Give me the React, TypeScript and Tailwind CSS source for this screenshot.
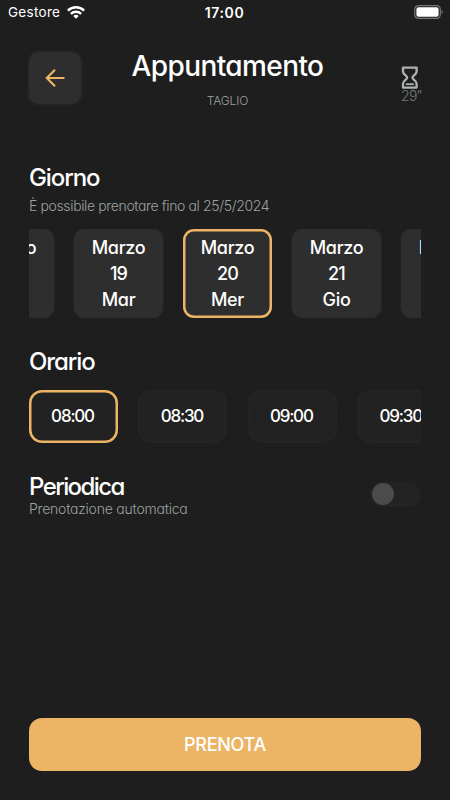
import React, { useState } from "react";

interface Day {
    month: string;
    day: string;
    weekday: string;
}

const DAYS: Day[] = [
    { month: "Marzo", day: "18", weekday: "Lun" },
    { month: "Marzo", day: "19", weekday: "Mar" },
    { month: "Marzo", day: "20", weekday: "Mer" },
    { month: "Marzo", day: "21", weekday: "Gio" },
    { month: "Marzo", day: "22", weekday: "Ven" },
];

const TIMES = ["08:00", "08:30", "09:00", "09:30"];

const StatusBar: React.FC = () => (
    <div className="grid h-6 grid-cols-3 items-center pl-2 pr-[7px] text-[13.5px] text-white">
        <div className="flex items-center gap-[7px]">
            <span className="tracking-[0.3px]">Gestore</span>
            <svg width="18" height="13" viewBox="0 0 18 13" fill="none" stroke="#fff" strokeWidth="2.5">
                <path d="M.9 4.6a11.6 11.6 0 0 1 16.2 0" />
                <path d="M3.9 7.8a7.3 7.3 0 0 1 10.2 0" />
                <path d="M9 12.8l-2.7-2.7a3.8 3.8 0 0 1 5.4 0z" fill="#fff" stroke="none" />
            </svg>
        </div>
        <span className="pr-0.5 text-center text-[14px] font-semibold tracking-[0.6px]">17:00</span>
        <svg className="justify-self-end" width="29" height="14" viewBox="0 0 29 14" fill="none">
            <rect x="0.7" y="0.7" width="25.6" height="12.6" rx="3.6" stroke="#777" strokeWidth="1.2" />
            <rect x="2.4" y="2.3" width="22.2" height="9.4" rx="2" fill="#fff" />
            <path d="M27.6 5v4c.8-.4 1.2-1.1 1.2-2s-.4-1.6-1.2-2z" fill="#777" />
        </svg>
    </div>
);

const App: React.FC = () => {
    const [day, setDay] = useState("20");
    const [time, setTime] = useState("08:00");
    const [periodic, setPeriodic] = useState(false);

    return (
        <div className="flex h-[800px] w-[450px] flex-col overflow-hidden bg-[#1e1e1e] font-['Inter',sans-serif] text-white">
            <StatusBar />
            <main className="flex flex-1 flex-col px-[29px] pb-[29px] [font-feature-settings:'cv11']">
                <header className="mt-7 flex h-[52px] items-start justify-between">
                    <button className="flex size-[52px] items-center justify-center rounded-[10px] bg-[#2e2e2e] shadow-[0_0_4px_#2e2e2e]">
                        <svg width="20" height="18" viewBox="0 0 20 18" fill="none" stroke="#ebb565" strokeWidth="2.2">
                            <path d="M10 0.8 1.8 9l8.2 8.2M1.8 9h17.7" />
                        </svg>
                    </button>
                    <div className="flex flex-col items-center pl-[5px]">
                        <h1 className="text-[28px] leading-7 font-medium tracking-[-0.6px]">Appuntamento</h1>
                        <p className="mt-[13px] text-[12px] leading-4 font-light tracking-[-0.1px] text-[#9da3a1]">TAGLIO</p>
                    </div>
                    <div className="flex w-[52px] flex-col items-start pl-8 pt-3.5">
                        <svg className="shrink-0" width="18" height="23" viewBox="0 0 18 23" fill="none" stroke="#aeb3b1" strokeWidth="2.3" strokeLinejoin="round">
                            <path d="M2 1.6h13.6v4.2c0 2.8-4.2 3.7-4.2 5.8s4.2 3 4.2 5.8v4.2H2v-4.2c0-2.8 4.2-3.7 4.2-5.8S2 8.6 2 5.8z" />
                            <path d="M4.8 18.2h8" strokeWidth="1.8" />
                        </svg>
                        <span className="-mt-px whitespace-nowrap text-[14px] leading-4 font-light tracking-[-0.7px] text-[#747a78]">29"</span>
                    </div>
                </header>

                <section className="mt-[58px]">
                    <h2 className="text-[24px] leading-8 font-medium tracking-[-1.1px]">Giorno</h2>
                    <p className="mt-0.5 text-[14px] leading-5 font-light tracking-[-0.37px] text-[#9da3a1]">È possibile prenotare fino al 25/5/2024</p>
                    <div className="mt-[13px] overflow-hidden">
                        <div className="-ml-16 flex gap-5">
                            {DAYS.map((d) => (
                                <button
                                    key={d.day}
                                    onClick={() => setDay(d.day)}
                                    className={`flex h-[89px] w-[89px] shrink-0 flex-col items-center justify-center rounded-[11px] bg-[#2e2e2e] text-[18px] leading-[26px] font-medium tracking-[-0.3px] ${
                                        day === d.day ? "shadow-[inset_0_0_0_2.5px_#ebb565]" : "shadow-[0_0_3px_#2e2e2e]"
                                    }`}
                                >
                                    <span>{d.month}</span>
                                    <span className="tracking-[-0.8px]">{d.day}</span>
                                    <span>{d.weekday}</span>
                                </button>
                            ))}
                        </div>
                    </div>
                </section>

                <section className="mt-7">
                    <h2 className="text-[24px] leading-8 font-medium tracking-[-1.1px]">Orario</h2>
                    <div className="mt-3 overflow-hidden">
                        <div className="flex gap-[20.4px]">
                            {TIMES.map((t) => (
                                <button
                                    key={t}
                                    onClick={() => setTime(t)}
                                    className={`h-[53px] w-[89px] shrink-0 rounded-[13px] bg-[#222222] pr-[2px] text-[17px] font-medium tracking-[-1.2px] ${
                                        time === t ? "shadow-[inset_0_0_0_2.5px_#ebb565]" : "shadow-[inset_0_0_0_2px_#242424]"
                                    }`}
                                >
                                    {t}
                                </button>
                            ))}
                        </div>
                    </div>
                </section>

                <section className="mt-7 flex items-center justify-between">
                    <div>
                        <h2 className="text-[24px] leading-8 font-medium tracking-[-1.6px]">Periodica</h2>
                        <p className="-mt-1 text-[14px] leading-5 font-light tracking-[-0.22px] text-[#9da3a1]">Prenotazione automatica</p>
                    </div>
                    <button
                        onClick={() => setPeriodic(!periodic)}
                        className={`mb-0.5 flex h-[25px] w-[51px] items-center rounded-full bg-[#232323] px-[2px] ${periodic ? "justify-end" : "justify-start"}`}
                    >
                        <span className="size-[22px] rounded-full bg-[#4b4b4b]" />
                    </button>
                </section>

                <button className="mt-auto h-[53px] w-full rounded-[13px] bg-[#ebb565] text-[18px] font-medium tracking-[-0.3px]">
                    PRENOTA
                </button>
            </main>
        </div>
    );
};

export default App;
